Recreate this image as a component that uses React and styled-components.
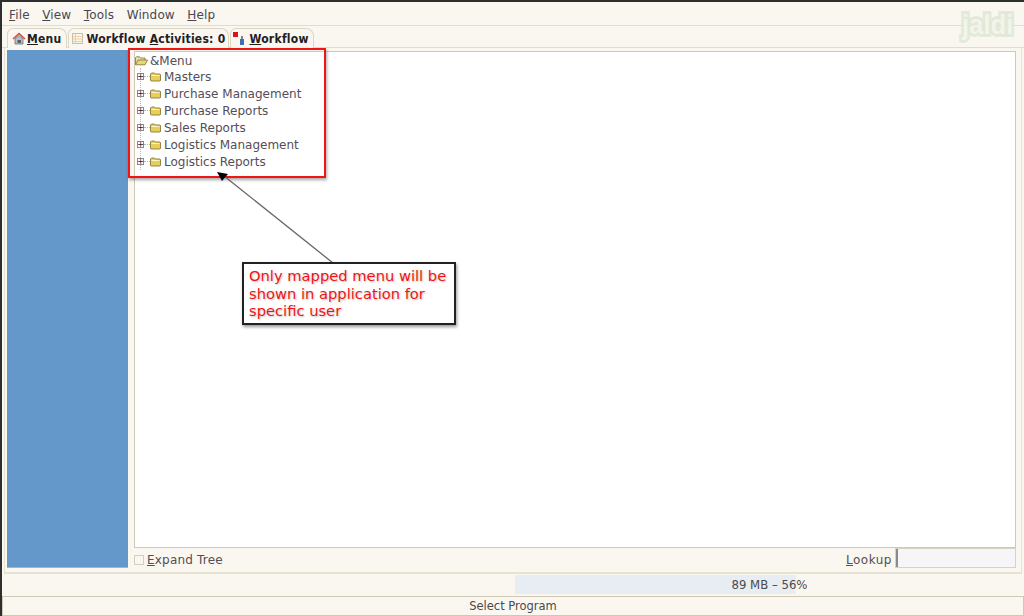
import React from 'react';
import styled, {createGlobalStyle} from 'styled-components';

const GlobalStyle = createGlobalStyle`
  html, body { margin: 0; padding: 0; background: #faf7f0; }
  body { font-family: "DejaVu Sans", sans-serif; overflow: hidden; }
`;

const menus = [
  {label: 'File', key: 'F', rest: 'ile'},
  {label: 'View', key: 'V', rest: 'iew'},
  {label: 'Tools', key: 'T', rest: 'ools'},
  {label: 'Window', key: '', rest: 'Window'},
  {label: 'Help', key: 'H', rest: 'elp'},
];

const treeItems = ['Masters', 'Purchase Management', 'Purchase Reports', 'Sales Reports', 'Logistics Management', 'Logistics Reports'];

const HomeIcon = () => (
  <svg width="14" height="13" viewBox="0 0 14 13">
    <path d="M1 7 L7 1.5 L13 7" fill="none" stroke="#c8503c" strokeWidth="1.6"/>
    <path d="M3 7 L7 3.5 L11 7 V12 H3 Z" fill="#b9bdc4" stroke="#6c7078" strokeWidth="0.8"/>
    <rect x="5.5" y="8" width="3.5" height="3" fill="#59606a"/>
  </svg>
);

const TableIcon = () => (
  <svg width="11" height="11" viewBox="0 0 11 11">
    <rect x="0.5" y="0.5" width="10" height="10" fill="#fbf6e6" stroke="#c4bfb0"/>
    <path d="M0.5 3.5 H10.5 M0.5 6 H10.5 M0.5 8.5 H10.5 M3.5 0.5 V10.5" stroke="#ecc79a" strokeWidth="0.8"/>
  </svg>
);

const FlowIcon = () => (
  <svg width="12" height="13" viewBox="0 0 12 13">
    <rect x="0" y="0" width="5" height="5" fill="#d8141c"/>
    <rect x="8" y="4" width="2" height="3" fill="#7c8794"/>
    <rect x="7" y="7" width="4" height="6" fill="#3f6ea8"/>
  </svg>
);

const FolderIcon = () => (
  <svg width="11" height="10" viewBox="0 0 11 10">
    <path d="M0.5 2 L1.5 1 H4.5 L5.5 2 H10 L10.5 2.5 V8.5 L10 9 H1 L0.5 8.5 Z" fill="#e8cf5c" stroke="#7d6c2c" strokeWidth="0.8"/>
    <path d="M1.5 3.5 H9.5" stroke="#fbf3c0" strokeWidth="1"/>
  </svg>
);

const OpenFolderIcon = () => (
  <svg width="13" height="10" viewBox="0 0 13 10">
    <path d="M0.5 8.5 V1.5 L1.5 0.8 H4.5 L5.5 2 H10 V4" fill="#e8e0b0" stroke="#7d6e38" strokeWidth="0.8"/>
    <path d="M0.5 8.8 L3 4 H12.5 L10 8.8 Z" fill="#ecd672" stroke="#7d6e38" strokeWidth="0.8"/>
  </svg>
);

const Arrow = () => (
  <ArrowLayer width="1024" height="616" viewBox="0 0 1024 616">
    <line x1="333" y1="263" x2="224" y2="176" stroke="#666" strokeWidth="1.3"/>
    <polygon points="217,172 228,174 222,181" fill="#000"/>
  </ArrowLayer>
);

const App = () => (
  <Page>
    <GlobalStyle/>
    <MenuBar>
      {menus.map((m) => (
        <MenuItem key={m.label}><u>{m.key}</u>{m.rest}</MenuItem>
      ))}
    </MenuBar>
    <Watermark>jaldi</Watermark>
    <TabStrip>
      <Tab $left={4} $gap={1} $right={5}><HomeIcon/><TabLabel><u>M</u>enu</TabLabel></Tab>
      <Tab $left={3} $gap={3} $right={3}><TableIcon/><TabLabel>Workflow <u>A</u>ctivities: 0</TabLabel></Tab>
      <Tab $left={2} $gap={4} $right={4}><FlowIcon/><TabLabel><u>W</u>orkflow</TabLabel></Tab>
    </TabStrip>
    <Panel>
      <Sidebar/>
      <Main>
        <TreeBox>
          <RootRow><OpenFolderIcon/><span>&amp;Menu</span></RootRow>
          <TreeList>
            {treeItems.map((item) => (
              <TreeRow key={item}>
                <Expander>+</Expander>
                <Dash/>
                <FolderIcon/>
                <RowLabel>{item}</RowLabel>
              </TreeRow>
            ))}
          </TreeList>
        </TreeBox>
        <FooterRow>
          <CheckLabel><CheckBox/><span><u>E</u>xpand Tree</span></CheckLabel>
          <LookupGroup>
            <LookupLabel><u>L</u>ookup</LookupLabel>
            <LookupInput/>
          </LookupGroup>
        </FooterRow>
      </Main>
    </Panel>
    <MemoryRow>
      <MemoryBar>
        <MemoryFill $pct={55.3}/>
        <MemoryText>89 MB – 56%</MemoryText>
      </MemoryBar>
    </MemoryRow>
    <StatusBar>Select Program</StatusBar>

    <Highlight/>
    <Arrow/>
    <Callout>Only mapped menu will be shown in application for specific user</Callout>
  </Page>
);

export default App;

const Page = styled.div`
  position: relative;
  width: 1024px;
  height: 616px;
  box-sizing: border-box;
  display: flex;
  flex-direction: column;
  background: #faf7f0;
  border-top: 2px solid #2e2e2e;
  border-left: 2px solid #2e2e2e;
  overflow: hidden;
  color: #544e56;
  font-size: 12px;
`;

const MenuBar = styled.div`
  height: 24px;
  flex: none;
  box-sizing: border-box;
  display: flex;
  align-items: center;
  gap: 12.5px;
  padding: 3px 0 0 7px;
  border-bottom: 1px solid #e2dccb;
  letter-spacing: 0.15px;
`;

const MenuItem = styled.span`
  color: #4c4650;
`;

const Watermark = styled.div`
  position: absolute;
  top: 7px;
  left: 960px;
  font: bold 25px/1.2 "Liberation Sans", sans-serif;
  letter-spacing: 0.3px;
  color: #f4f5ea;
  -webkit-text-stroke: 5px #dfe8d6;
  paint-order: stroke fill;
  opacity: 0.9;
  transform: scaleY(1.1);
`;

const TabStrip = styled.div`
  height: 22px;
  flex: none;
  box-sizing: border-box;
  display: flex;
  align-items: flex-end;
  gap: 1px;
  padding-left: 5px;
  border-bottom: 1px solid #e2dccb;
`;

const Tab = styled.div`
  height: 20px;
  box-sizing: border-box;
  display: flex;
  align-items: center;
  gap: ${(p) => p.$gap}px;
  padding: 0 ${(p) => p.$right}px 0 ${(p) => p.$left}px;
  margin-bottom: -1px;
  background: #faf7f0;
  border: 1px solid #dcd6c4;
  border-bottom: 0;
  border-radius: 6px 8px 0 0;
`;

const TabLabel = styled.span`
  color: #222024;
  font-family: "DejaVu Sans Condensed", "DejaVu Sans", sans-serif;
  font-stretch: condensed;
  font-size: 12px;
  font-weight: bold;
  letter-spacing: 0.25px;
`;

const Panel = styled.div`
  height: 526px;
  flex: none;
  box-sizing: border-box;
  display: flex;
  gap: 6px;
  margin: 0 2px 0 2px;
  padding: 2px 5px 4px 2px;
  border-bottom: 2px solid #e6e1d2;
  border-left: 1px solid #e6e1d2;
  border-right: 1px solid #e6e1d2;
`;

const Sidebar = styled.div`
  width: 121px;
  flex: none;
  background: #6497ca;
  border-bottom: 1px solid #a8b4bc;
`;

const Main = styled.div`
  flex: 1;
  min-width: 0;
  display: flex;
  flex-direction: column;
`;

const TreeBox = styled.div`
  height: 497px;
  flex: none;
  margin-top: 1px;
  box-sizing: border-box;
  background: #fff;
  border: 1px solid #cfc9b8;
`;

const RootRow = styled.div`
  height: 17px;
  display: flex;
  align-items: center;
  gap: 2px;
`;

const TreeList = styled.div`
  margin: -1px 0 0 5px;
  border-left: 1px dotted #b8b8b8;
`;

const TreeRow = styled.div`
  height: 17px;
  display: flex;
  align-items: center;
`;

const Expander = styled.span`
  width: 7px;
  height: 7px;
  flex: none;
  margin-left: -4px;
  box-sizing: border-box;
  display: flex;
  align-items: center;
  justify-content: center;
  background: #fff;
  border: 1px solid #8a8a8a;
  font: 8px/1 "DejaVu Sans", sans-serif;
  color: #222;
`;

const Dash = styled.span`
  width: 6px;
  flex: none;
  border-top: 1px dotted #b8b8b8;
`;

const RowLabel = styled.span`
  margin-left: 3px;
`;

const FooterRow = styled.div`
  flex: 1;
  display: flex;
  align-items: center;
  justify-content: space-between;
  letter-spacing: 0.2px;
`;

const CheckLabel = styled.label`
  display: flex;
  align-items: center;
  gap: 3px;
  margin-top: 3px;
`;

const CheckBox = styled.span`
  width: 8px;
  height: 8px;
  background: #faf7f0;
  border: 1px solid #d4cfbf;
`;

const LookupGroup = styled.div`
  display: flex;
  align-items: center;
  gap: 3px;
`;

const LookupLabel = styled.span`
  margin-top: 3px;
  letter-spacing: 0.5px;
`;

const LookupInput = styled.div`
  width: 121px;
  height: 20px;
  box-sizing: border-box;
  background: #f6f5f8;
  border: 1px solid #d8d2c0;
  box-shadow: inset 2px 0 0 #8e8a86;
`;

const MemoryRow = styled.div`
  height: 22px;
  flex: none;
  display: flex;
  box-sizing: border-box;
  padding: 1px 0 0 513px;
`;

const MemoryBar = styled.div`
  position: relative;
  width: 510px;
  height: 19px;
`;

const MemoryFill = styled.div`
  height: 100%;
  width: ${(p) => p.$pct}%;
  background: #e8edf4;
`;

const MemoryText = styled.div`
  position: absolute;
  inset: 0;
  display: flex;
  align-items: center;
  justify-content: center;
  font-size: 11.7px;
  color: #4a4a4a;
`;

const StatusBar = styled.div`
  flex: 1;
  box-sizing: border-box;
  display: flex;
  align-items: center;
  justify-content: center;
  border: 1px solid #cfc8b4;
  font-size: 11.5px;
  color: #4a4a4a;
`;

const Highlight = styled.div`
  position: absolute;
  left: 126px;
  top: 46px;
  width: 198px;
  height: 130px;
  box-sizing: border-box;
  border: 2px solid #f01414;
  box-shadow: 1px 2px 3px rgba(0, 0, 0, 0.35);
`;

const ArrowLayer = styled.svg`
  position: absolute;
  left: -2px;
  top: -2px;
  pointer-events: none;
`;

const Callout = styled.div`
  position: absolute;
  left: 240px;
  top: 260px;
  width: 214px;
  height: 63px;
  box-sizing: border-box;
  padding: 3px 5px;
  background: #fff;
  border: 2px solid #222;
  box-shadow: 1px 2px 3px rgba(0, 0, 0, 0.4);
  color: #f01414;
  font: 14.7px/17.5px "DejaVu Sans", sans-serif;
  text-shadow: 1px 1px 2px rgba(0, 0, 0, 0.25);
`;
